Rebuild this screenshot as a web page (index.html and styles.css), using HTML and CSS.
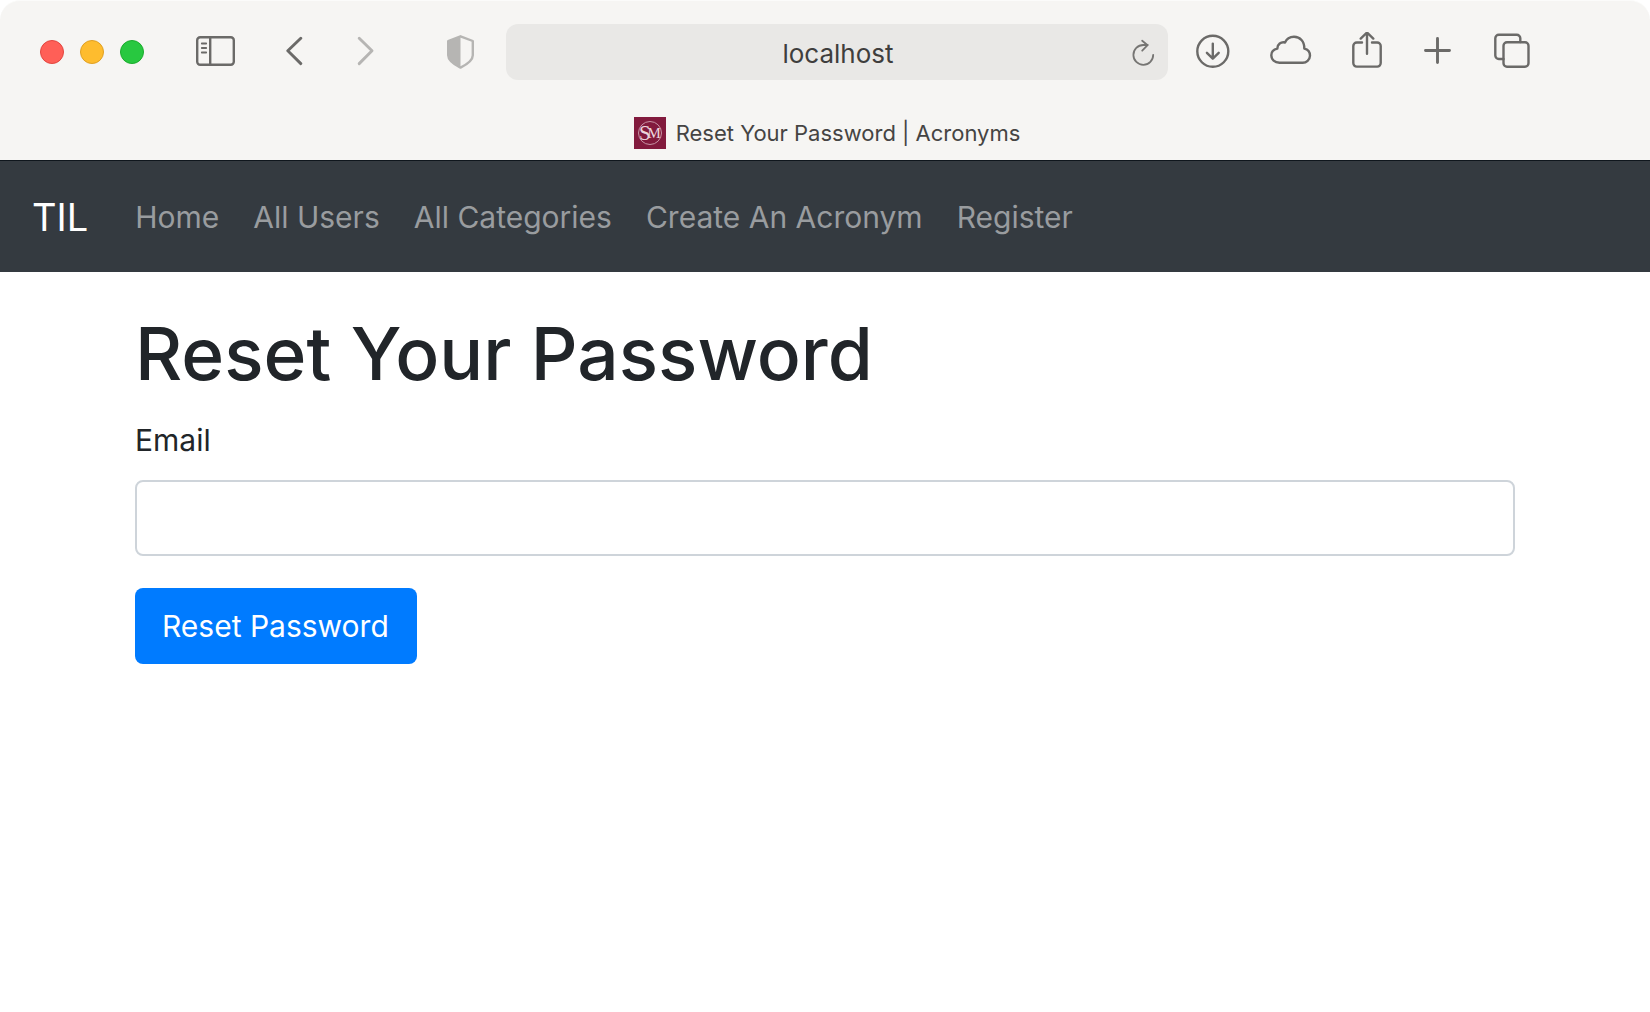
FILE: index.html
```html
<!DOCTYPE html>
<html lang="en">
<head>
<meta charset="utf-8">
<meta name="viewport" content="width=device-width, initial-scale=1">
<title>Reset Your Password | Acronyms</title>
<link rel="stylesheet" href="styles.css">
</head>
<body>
<div class="browser">
  <div class="toolbar">
    <div class="lights">
      <button class="light light-close" type="button" aria-label="Close"></button>
      <button class="light light-minimize" type="button" aria-label="Minimize"></button>
      <button class="light light-zoom" type="button" aria-label="Zoom"></button>
    </div>
    <button class="tool tool-sidebar" type="button" aria-label="Sidebar">
      <svg width="40" height="40" viewBox="0 0 40 40"><rect x="1.2" y="5.2" width="36.6" height="27.6" rx="3"/><path d="M14.2 5.2v27.6"/><path class="thin" d="M5.8 11.5h4.4M5.8 16h4.4M5.8 20.5h4.4"/></svg>
    </button>
    <div class="history">
      <button class="tool" type="button" aria-label="Back">
        <svg width="18" height="40" viewBox="0 0 18 40"><path class="bold" d="M14.8 6.2 1.8 18.8l13 12.8"/></svg>
      </button>
      <button class="tool tool-dim" type="button" aria-label="Forward">
        <svg width="18" height="40" viewBox="0 0 18 40"><path class="bold" d="M2.2 6.2 15 18.8 2.2 31.6"/></svg>
      </button>
    </div>
    <button class="tool tool-dim tool-shield" type="button" aria-label="Privacy report">
      <svg width="28" height="40" viewBox="0 0 28 40"><path d="M13.5 4.3 25.8 9v14.2c0 5.6-6.3 9.4-12.3 12.4C7.5 32.6 1.2 28.8 1.2 23.2V9z"/><path class="filled" d="M13.5 4.3V35.6C7.5 32.6 1.2 28.8 1.2 23.2V9z"/></svg>
    </button>
    <div class="address">
      <span class="address-text">localhost</span>
      <button class="tool tool-reload" type="button" aria-label="Reload">
        <svg width="24" height="40" viewBox="0 0 24 40"><path class="thin" d="M21.2 22.8A9.9 9.9 0 1 1 11.3 13h4.5M10.2 8.7l5.4 4.5-5.4 5.5"/></svg>
      </button>
    </div>
    <button class="tool tool-download" type="button" aria-label="Downloads">
      <svg width="34" height="40" viewBox="0 0 34 40"><circle cx="16.8" cy="19.3" r="15.5"/><path d="M16.8 11.6v15M10.9 20.8l5.9 5.9 5.9-5.9"/></svg>
    </button>
    <button class="tool tool-cloud" type="button" aria-label="iCloud tabs">
      <svg width="42" height="40" viewBox="0 0 42 40"><path d="M9.5 30.7h22.8a7.3 7.3 0 0 0 7.7-7c0-3.6-2.4-6.3-5.7-7.1C34.6 9.5 30 4.7 24 4.7c-4.2 0-7.5 2.3-9 5.8-4-.9-7.6 1.7-7.7 6.1C3.5 17.4 1.3 20 1.3 23.3c0 4.2 3.4 7.4 8.2 7.4z"/></svg>
    </button>
    <button class="tool tool-share" type="button" aria-label="Share">
      <svg width="30" height="40" viewBox="0 0 30 40"><path d="M10 10.5H4.8a3.5 3.5 0 0 0-3.5 3.5v17.1a3.5 3.5 0 0 0 3.5 3.5h20.4a3.5 3.5 0 0 0 3.5-3.5V14a3.5 3.5 0 0 0-3.5-3.5H20"/><path d="M15 21.8V.8M8.7 6.6 15 .5l6.3 6.1"/></svg>
    </button>
    <button class="tool tool-plus" type="button" aria-label="New tab">
      <svg width="28" height="40" viewBox="0 0 28 40"><path class="bold" d="M1.5 18.5h24M13.5 6.5v24"/></svg>
    </button>
    <button class="tool tool-tabs" type="button" aria-label="Tab overview">
      <svg width="36" height="40" viewBox="0 0 36 40"><path d="M9.5 27H4.8a3.5 3.5 0 0 1-3.5-3.5V6.3a3.5 3.5 0 0 1 3.5-3.5h18a3.5 3.5 0 0 1 3.5 3.5V10"/><rect x="9.5" y="10.3" width="25" height="24.5" rx="3.5"/></svg>
    </button>
  </div>
  <div class="tab">
    <svg class="favicon" width="32" height="32" viewBox="0 0 32 32" aria-hidden="true"><rect width="32" height="32" fill="#821a3d"/><circle cx="16" cy="16" r="11.5" fill="none" stroke="#c894a5"/><text class="mark" x="5" y="22.5">S</text><text class="mark mark-small" x="13.5" y="21">M</text></svg>
    <span>Reset Your Password | Acronyms</span>
  </div>
</div>

<nav class="navbar">
  <a class="brand" href="#">TIL</a>
  <ul class="links">
    <li><a href="#">Home</a></li>
    <li><a href="#">All Users</a></li>
    <li><a href="#">All Categories</a></li>
    <li><a href="#">Create An Acronym</a></li>
    <li><a href="#">Register</a></li>
  </ul>
</nav>

<main class="container">
  <h1>Reset Your Password</h1>
  <form class="form">
    <label for="email">Email</label>
    <input id="email" name="email" type="email">
    <button class="submit" type="submit">Reset Password</button>
  </form>
</main>
</body>
</html>
```

FILE: styles.css
```css
* {
  box-sizing: border-box;
}

body {
  margin: 0;
  background: #fff;
  color: #212529;
  font-family: Inter, "Liberation Sans", sans-serif;
  font-size: 30px;
  line-height: 48px;
}

button {
  font: inherit;
}

/* Browser window chrome */
.browser {
  background: #f6f5f3;
  border-top: 1px solid #fbfbfa;
  border-bottom: 1px solid #0f161d;
  border-radius: 20px 20px 0 0;
}

.toolbar {
  display: flex;
  align-items: center;
  height: 102px;
  padding: 0 120px 0 40px;
}

.lights {
  display: flex;
  gap: 16px;
}

.light {
  width: 24px;
  height: 24px;
  padding: 0;
  border: 1px solid;
  border-radius: 50%;
}

.light-close {
  background: #ff5f57;
  border-color: #e2463f;
}

.light-minimize {
  background: #febc2e;
  border-color: #e0a023;
}

.light-zoom {
  background: #28c840;
  border-color: #1bac2c;
}

.tool {
  flex: none;
  padding: 0;
  border: 0;
  background: none;
  color: #6b6a68;
}

.tool-dim {
  color: #b6b5b3;
}

.tool svg {
  display: block;
  fill: none;
  stroke: currentColor;
  stroke-width: 2.4;
  stroke-linecap: round;
  stroke-linejoin: round;
}

.tool .bold {
  stroke-width: 2.9;
}

.tool .thin {
  stroke-width: 1.8;
}

.tool .filled {
  fill: currentColor;
  stroke: none;
}

.tool-sidebar {
  margin-left: 52px;
}

.history {
  display: flex;
  gap: 53px;
  margin-left: 50px;
}

.tool-shield {
  margin: 0 31px 0 72px;
}

.address {
  display: flex;
  flex: 1;
  align-items: center;
  height: 56px;
  padding: 0 12px 0 38px;
  border-radius: 12px;
  background: #e9e8e6;
}

.address-text {
  flex: 1;
  padding-top: 4px;
  color: #3f3e3d;
  font-size: 26px;
  text-align: center;
}

.tool-reload {
  color: #767573;
}

.tool-download {
  margin-left: 28px;
}

.tool-cloud,
.tool-share {
  margin-left: 40px;
}

.tool-plus,
.tool-tabs {
  margin-left: 42px;
}

.tab {
  display: flex;
  align-items: center;
  justify-content: center;
  gap: 10px;
  height: 57px;
  padding: 2px 0 0 4px;
  color: #454443;
  font-size: 22px;
}

.mark {
  fill: #ecd5dc;
  font-family: "Liberation Serif", serif;
  font-size: 21px;
}

.mark-small {
  font-size: 15px;
}

/* Page */
.navbar {
  display: flex;
  align-items: center;
  gap: 47px;
  height: 111px;
  padding: 0 32px;
  background: #343a40;
}

.navbar a {
  text-decoration: none;
}

.brand {
  color: #fff;
  font-size: 38px;
}

.links {
  display: flex;
  gap: 34px;
  margin: 0;
  padding: 0;
  list-style: none;
}

.links a {
  color: #999c9f;
}

.container {
  padding: 32px 135px;
}

h1 {
  margin: 0 0 12px;
  font-size: 73px;
  font-weight: 500;
  line-height: 100px;
}

.form {
  display: flex;
  flex-direction: column;
  align-items: flex-start;
}

.form label {
  margin-bottom: 16px;
}

.form input {
  width: 100%;
  height: 76px;
  margin-bottom: 32px;
  padding: 12px 24px;
  border: 2px solid #ced4da;
  border-radius: 8px;
  background: #fff;
  color: #495057;
  font: inherit;
}

.submit {
  height: 76px;
  padding: 0 28px 0 27px;
  border: 0;
  border-radius: 8px;
  background: #007bff;
  color: #fff;
}
```
